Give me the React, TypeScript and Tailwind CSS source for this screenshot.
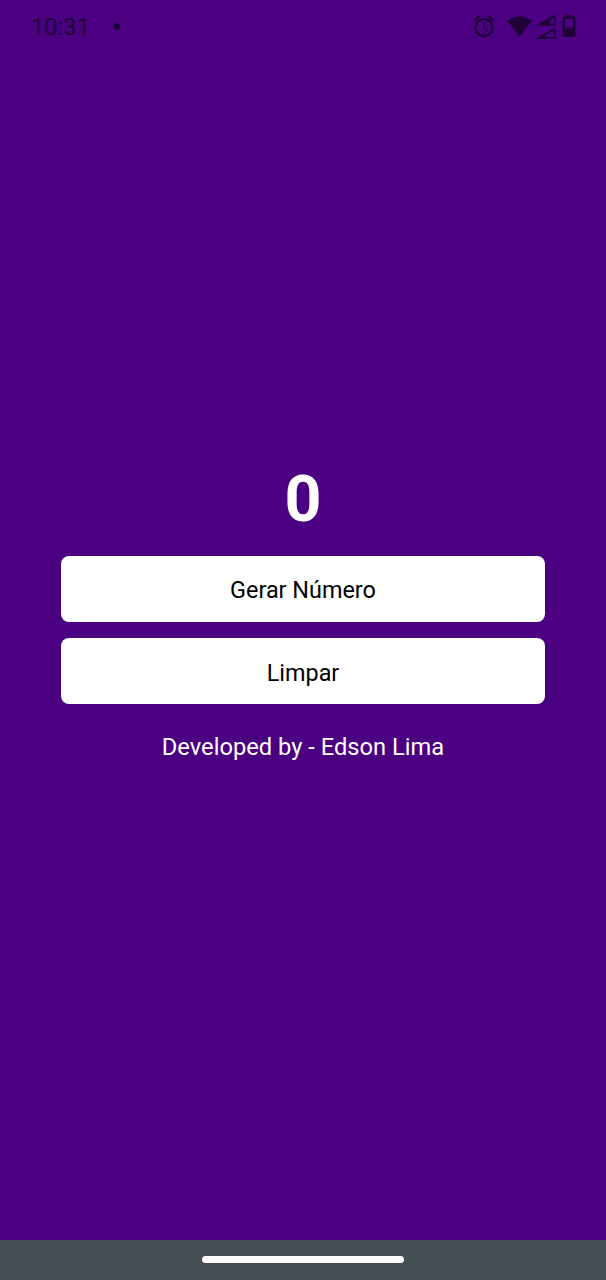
import { useState } from "react";

function StatusIcons() {
  return (
    <svg width="110" height="32" viewBox="470 10 110 32" className="block" fill="none">
      <g stroke="#1f0038" strokeWidth="2.2">
        <circle cx="484" cy="27.5" r="8.6" />
        <path d="M484 21.8v6l4 3.6" strokeWidth="1.8" />
        <path d="M474.6 20.6l5-4.4M493.4 20.6l-5-4.4" />
      </g>
      <path d="M507 20.8Q519.5 11.5 532 20.8L519.5 36.8Z" fill="#1f0038" />
      <path d="M539 24.5L554.8 16V24.5Z" stroke="#1f0038" strokeWidth="1.8" />
      <path d="M536 25.4L550 17.8V25.4Z" fill="#1f0038" />
      <path d="M539 37.8L554.8 29V37.8Z" stroke="#1f0038" strokeWidth="1.8" />
      <path d="M536 38.7L545 33.5V38.7Z" fill="#1f0038" />
      <path
        d="M564.5 16.5H566V15H572V16.5H573.5Q575.5 16.5 575.5 18.5V35Q575.5 37 573.5 37H564.5Q562.5 37 562.5 35V18.5Q562.5 16.5 564.5 16.5ZM565 19V27.5H573V19Z"
        fill="#1f0038"
        fillRule="evenodd"
      />
    </svg>
  );
}

export default function App() {
  const [value, setValue] = useState(0);
  const button =
    "h-[65.5px] w-full rounded-[8px] bg-white pt-[3px] text-[23.4px] leading-[28px] text-black";

  return (
    <div className="flex h-[1280px] w-[606px] flex-col overflow-hidden bg-[#4b0082] font-[Roboto,sans-serif]">
      <header className="flex h-[52px] shrink-0 items-center justify-between pr-[26px] pl-[31px] text-[#1f0038]">
        <div className="flex items-center gap-[23px]">
          <span className="pt-[2px] text-[23.7px] leading-[28px]">10:31</span>
          <span className="size-[7px] rounded-full bg-[#1f0038]" />
        </div>
        <StatusIcons />
      </header>
      <main className="flex flex-1 flex-col items-center px-[60.6px] pt-[408px]">
        <h1 className="h-[96px] text-[64.5px] leading-[79px] font-bold text-white">{value}</h1>
        <div className="flex w-full flex-col gap-[16.9px]">
          <button className={button} onClick={() => setValue(Math.floor(Math.random() * 100))}>
            Gerar Número
          </button>
          <button className={button} onClick={() => setValue(0)}>
            Limpar
          </button>
        </div>
        <p className="mt-[29px] text-[23.7px] leading-[28px] text-white">Developed by - Edson Lima</p>
      </main>
      <footer className="flex h-[40px] shrink-0 items-center justify-center bg-[#454e53]">
        <div className="mb-px h-[7px] w-[202px] rounded-full bg-white" />
      </footer>
    </div>
  );
}
